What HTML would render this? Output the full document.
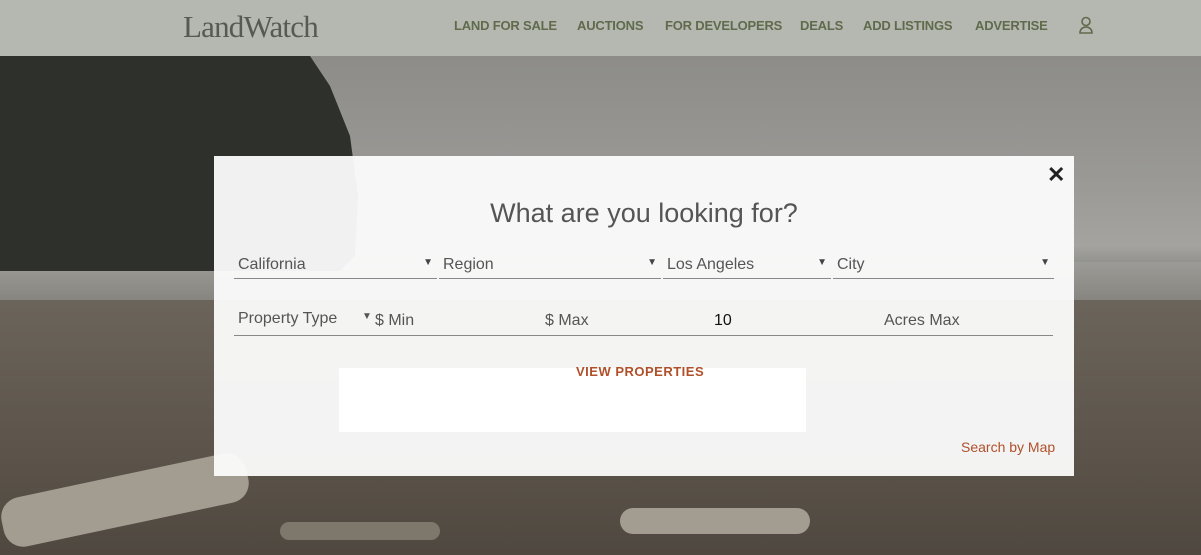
<!DOCTYPE html>
<html><head><style>
*{margin:0;padding:0;box-sizing:border-box}
body{width:1201px;height:555px;overflow:hidden;position:relative;font-family:"Liberation Sans",sans-serif;background:#6f6a63}
.bg{position:absolute;left:0;top:56px;width:1201px;height:499px;
background:linear-gradient(180deg,#8d8c89 0%,#9a9996 25%,#a4a3a0 38%,#8f8f8c 42%,#6f6a64 50%,#5f584f 70%,#6a6258 100%)}
.trees{position:absolute;left:0;top:56px;width:360px;height:215px;background:#2e302b;clip-path:polygon(0 0,310px 0,330px 30px,350px 80px,358px 140px,355px 200px,340px 215px,0 215px)}
.water{position:absolute;left:0;top:262px;width:1201px;height:40px;background:linear-gradient(180deg,#9c9b97,#86847e)}
.beach{position:absolute;left:0;top:300px;width:1201px;height:255px;background:linear-gradient(180deg,#6b645b,#5c544a 60%,#4f4840)}
.log{position:absolute;background:#a39c91;border-radius:20px}
header{position:absolute;left:0;top:0;width:1201px;height:56px;background:#b5b8b0}
.logo{position:absolute;left:183px;top:9px;font-family:"Liberation Serif",serif;font-size:31px;color:#555a52;letter-spacing:-0.8px}
nav{position:absolute;top:18px;left:454px;font-size:13px;font-weight:bold;color:#606a4c;letter-spacing:-0.2px}
nav span{position:absolute;white-space:nowrap}
.modal{position:absolute;left:214px;top:156px;width:860px;height:320px;background:rgba(252,252,252,0.95)}
.x{position:absolute;left:833px;top:6px;font-size:22px;font-weight:bold;color:#222}
h1{position:absolute;left:0;width:860px;top:42px;text-align:center;font-weight:normal;font-size:27px;color:#555}
.f{position:absolute;font-size:16px;color:#555;border-bottom:1px solid #888;height:26px;padding-top:3px}
.f .a{position:absolute;right:4px;top:4px;font-size:10px;color:#444}
.t{position:absolute;font-size:16px;color:#555}
.vp{position:absolute;left:362px;top:208px;font-size:13px;font-weight:bold;color:#b0502a;letter-spacing:.5px}
.sm{position:absolute;left:747px;top:283px;font-size:14px;color:#b0502a}
</style></head><body>
<div class="bg"></div>
<div class="water"></div>
<div class="beach"></div>
<div class="trees"></div>
<div class="log" style="left:0;top:475px;width:250px;height:50px;transform:rotate(-12deg)"></div>
<div class="log" style="left:620px;top:508px;width:190px;height:26px"></div>
<div class="log" style="left:280px;top:522px;width:160px;height:18px;background:#7e776c"></div>
<header>
<div class="logo">LandWatch</div>
<nav>
<span style="left:0">LAND FOR SALE</span>
<span style="left:123px">AUCTIONS</span>
<span style="left:211px">FOR DEVELOPERS</span>
<span style="left:346px">DEALS</span>
<span style="left:409px">ADD LISTINGS</span>
<span style="left:521px">ADVERTISE</span>
</nav>
<svg style="position:absolute;left:1078px;top:16px" width="16" height="18" viewBox="0 0 16 18" fill="none" stroke="#606a4c" stroke-width="1.6"><circle cx="8" cy="5.5" r="4"/><path d="M2 17h12c0-4-3-6-6-6s-6 2-6 6z"/></svg>
</header>
<div class="modal">
<div style="position:absolute;left:125px;top:212px;width:467px;height:64px;background:#fff"></div>
<div class="x">✕</div>
<h1>What are you looking for?</h1>
<div class="f" style="left:20px;top:97px;width:203px;padding-left:4px">California<span class="a">▼</span></div>
<div class="f" style="left:225px;top:97px;width:222px;padding-left:4px">Region<span class="a">▼</span></div>
<div class="f" style="left:449px;top:97px;width:168px;padding-left:4px">Los Angeles<span class="a">▼</span></div>
<div class="f" style="left:619px;top:97px;width:221px;padding-left:4px">City<span class="a">▼</span></div>
<div class="f" style="left:20px;top:153px;width:819px;height:27px"></div>
<div class="t" style="left:24px;top:154px">Property Type</div>
<div class="t" style="left:148px;top:155px;font-size:10px">▼</div>
<div class="t" style="left:161px;top:156px">$ Min</div>
<div class="t" style="left:331px;top:156px">$ Max</div>
<div class="t" style="left:500px;top:156px;color:#111">10</div>
<div class="t" style="left:670px;top:156px">Acres Max</div>
<div class="vp">VIEW PROPERTIES</div>
<div class="sm">Search by Map</div>
</div>
</body></html>
